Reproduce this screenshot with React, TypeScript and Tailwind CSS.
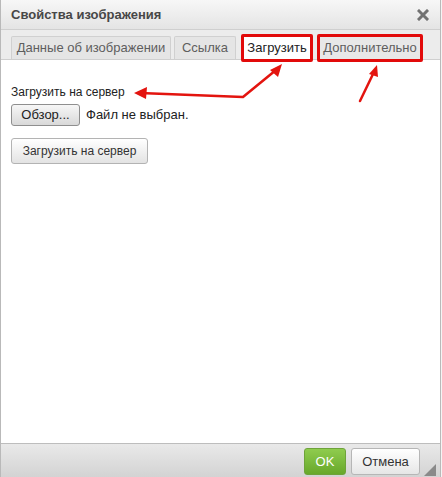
import React from "react";

export default function App() {
  const font = { fontFamily: '"Liberation Sans", Arial, sans-serif' };
  return (
    <div className="relative w-[442px] h-[477px] bg-[#f4f4f4] overflow-hidden" style={font}>
      <div className="flex flex-col w-[441px] h-[477px] border-r border-l border-[#b9b9b9] bg-white">
        {/* Title bar */}
        <div className="flex items-center justify-between h-[30px] px-[10px] border-b border-[#cfcfcf] bg-gradient-to-b from-[#f7f7f7] to-[#e4e4e4]">
          <span className="text-[13px] font-bold text-[#474747]">Свойства изображения</span>
          <svg width="12" height="12" viewBox="0 0 12 12" className="mr-[1px]">
            <path d="M2 2 L10 10 M10 2 L2 10" stroke="#727272" strokeWidth="3" strokeLinecap="square" />
          </svg>
        </div>
        {/* Tabs */}
        <div className="flex items-end h-[30px] pl-[10px] bg-[#ececec] border-b border-[#cfcfcf]">
          <div className="flex items-center justify-center w-[160px] h-[23px] border border-b-0 border-[#d0d0d0] bg-[#e5e5e5] text-[13px] text-[#5e5e5e] rounded-t-[2px]">
            Данные об изображении
          </div>
          <div className="flex items-center justify-center ml-[3px] w-[62px] h-[23px] border border-b-0 border-[#d0d0d0] bg-[#e5e5e5] text-[13px] text-[#5e5e5e] rounded-t-[2px]">
            Ссылка
          </div>
          <div className="flex items-center justify-center ml-[5px] w-[72px] h-[28px] mb-[-3px] border-[3px] border-[#e20a0a] bg-white text-[13px] text-[#222] rounded-[2px] z-10">
            Загрузить
          </div>
          <div className="flex items-center justify-center ml-[4px] w-[106px] h-[28px] mb-[-3px] border-[3px] border-[#e20a0a] bg-[#e8e8e8] text-[13px] text-[#5e5e5e] rounded-[2px] z-10">
            Дополнительно
          </div>
        </div>
        {/* Content */}
        <div className="flex-1 flex flex-col items-start pl-[10px] pt-[25px] bg-white">
          <div className="text-[12px] text-[#222] leading-[14px]">Загрузить на сервер</div>
          <div className="flex items-center mt-[5px]">
            <div className="flex items-center justify-center w-[69px] h-[22px] border border-[#8f8f8f] rounded-[3px] bg-gradient-to-b from-[#f7f7f7] to-[#d9d9d9] text-[13px] text-[#222]">
              Обзор...
            </div>
            <span className="ml-[6px] text-[13px] text-[#222]">Файл не выбран.</span>
          </div>
          <div className="flex items-center justify-center mt-[12px] w-[137px] h-[26px] border border-[#b3b3b3] rounded-[3px] bg-gradient-to-b from-[#ffffff] to-[#e3e3e3] text-[12px] text-[#333]">
            Загрузить на сервер
          </div>
        </div>
        {/* Footer */}
        <div className="relative flex items-center justify-end h-[34px] pt-[2px] pr-[20px] border-t border-[#bdbdbd] bg-gradient-to-b from-[#e9e9e9] to-[#d3d3d3]">
          <div className="flex items-center justify-center w-[42px] h-[27px] border border-[#6ea33a] rounded-[3px] bg-gradient-to-b from-[#8fcc4e] to-[#68a82a] text-[13px] text-white">
            OK
          </div>
          <div className="flex items-center justify-center ml-[5px] w-[69px] h-[27px] border border-[#b6b6b6] rounded-[3px] bg-gradient-to-b from-[#ffffff] to-[#e6e6e6] text-[13px] text-[#333]">
            Отмена
          </div>
          <svg width="12" height="12" viewBox="0 0 12 12" className="absolute right-[4px] bottom-[1px]">
            <path d="M12 0 L12 12 L0 12 Z" fill="#8a8a8a" />
          </svg>
        </div>
      </div>
      {/* Annotation arrows */}
      <svg className="absolute left-0 top-0 pointer-events-none" width="442" height="477" viewBox="0 0 442 477">
        <g stroke="#e3140f" strokeWidth="2.5" fill="none" strokeLinecap="round" strokeLinejoin="round">
          <polyline points="140,93 243,97 276,70" />
          <line x1="360" y1="101" x2="374" y2="72" />
        </g>
        <g fill="#e3140f">
          <polygon points="134,93 147,87 146,99" />
          <polygon points="282,64 270,70 278,77" />
          <polygon points="377,65 369,74 378,77" />
        </g>
      </svg>
    </div>
  );
}
